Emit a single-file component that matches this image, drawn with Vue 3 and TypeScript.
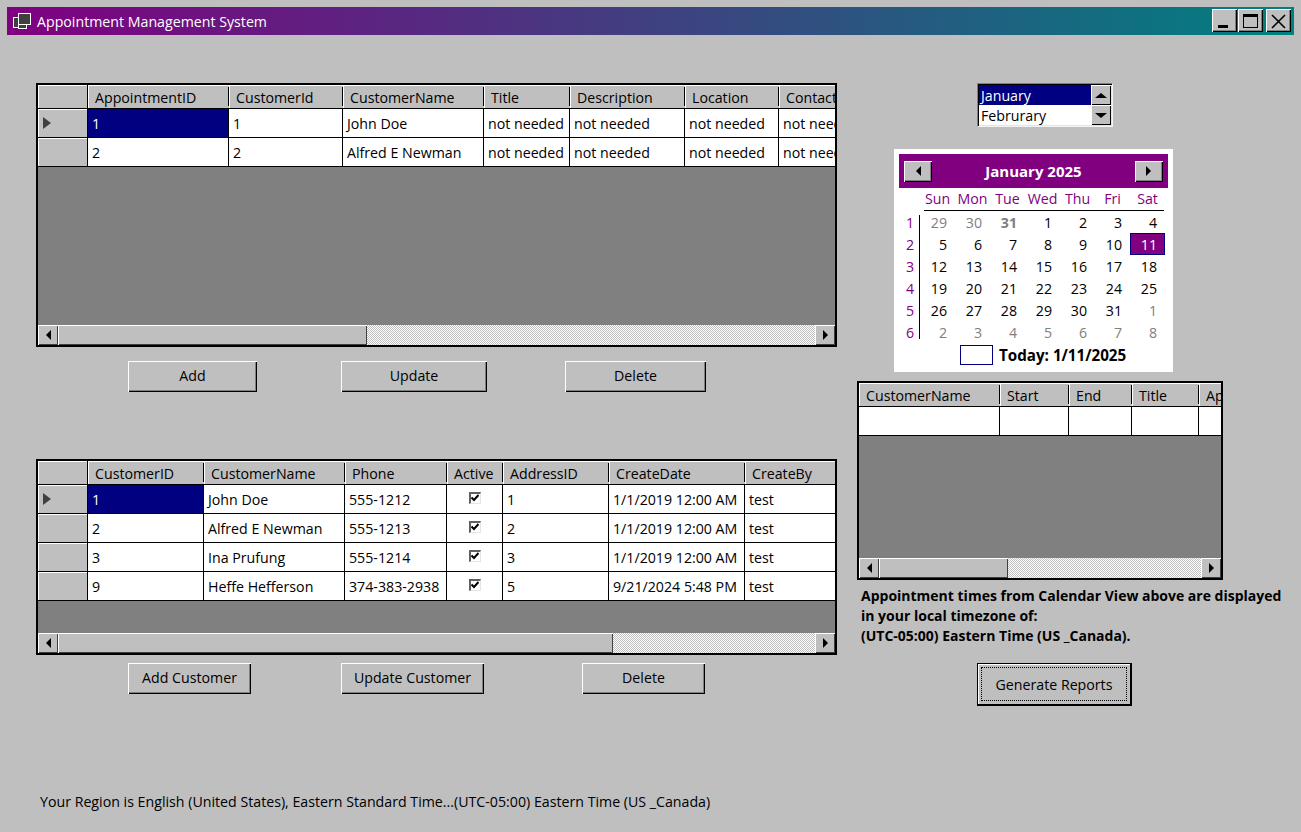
<script setup lang="ts">
interface GridCol { label: string; width: number; check?: boolean }
interface GridDef {
  cls: string
  cols: GridCol[]
  rows: string[][]
  barThumb: number
}

const apptCols: GridCol[] = [
  { label: 'AppointmentID', width: 141 },
  { label: 'CustomerId', width: 114 },
  { label: 'CustomerName', width: 141 },
  { label: 'Title', width: 86 },
  { label: 'Description', width: 115 },
  { label: 'Location', width: 94 },
  { label: 'Contact', width: 108 },
]
const customerCols: GridCol[] = [
  { label: 'CustomerID', width: 116 },
  { label: 'CustomerName', width: 141 },
  { label: 'Phone', width: 102 },
  { label: 'Active', width: 56, check: true },
  { label: 'AddressID', width: 106 },
  { label: 'CreateDate', width: 136 },
  { label: 'CreateBy', width: 120 },
]

const grids: GridDef[] = [
  {
    cls: 'grid--appts',
    cols: apptCols,
    barThumb: 309,
    rows: [
      ['1', '1', 'John Doe', 'not needed', 'not needed', 'not needed', 'not needed'],
      ['2', '2', 'Alfred E Newman', 'not needed', 'not needed', 'not needed', 'not needed'],
    ],
  },
  {
    cls: 'grid--customers',
    cols: customerCols,
    barThumb: 555,
    rows: [
      ['1', 'John Doe', '555-1212', '', '1', '1/1/2019 12:00 AM', 'test'],
      ['2', 'Alfred E Newman', '555-1213', '', '2', '1/1/2019 12:00 AM', 'test'],
      ['3', 'Ina Prufung', '555-1214', '', '3', '1/1/2019 12:00 AM', 'test'],
      ['9', 'Heffe Hefferson', '374-383-2938', '', '5', '9/21/2024 5:48 PM', 'test'],
    ],
  },
]

const viewCols: GridCol[] = [
  { label: 'CustomerName', width: 141 },
  { label: 'Start', width: 69 },
  { label: 'End', width: 63 },
  { label: 'Title', width: 67 },
  { label: 'Appointment', width: 60 },
]

const actionRows = [
  [
    { label: 'Add', width: 129, gap: 84 },
    { label: 'Update', width: 146, gap: 78 },
    { label: 'Delete', width: 141, gap: 0 },
  ],
  [
    { label: 'Add Customer', width: 123, gap: 90 },
    { label: 'Update Customer', width: 143, gap: 98 },
    { label: 'Delete', width: 123, gap: 0 },
  ],
]

const dayNames = ['Sun', 'Mon', 'Tue', 'Wed', 'Thu', 'Fri', 'Sat']
// Six week rows, leading and trailing days are drawn muted.
const weeks = [
  [29, 30, 31, 1, 2, 3, 4],
  [5, 6, 7, 8, 9, 10, 11],
  [12, 13, 14, 15, 16, 17, 18],
  [19, 20, 21, 22, 23, 24, 25],
  [26, 27, 28, 29, 30, 31, 1],
  [2, 3, 4, 5, 6, 7, 8],
]
const isMuted = (w: number, d: number) => (w === 0 && d < 3) || (w === 4 && d === 6) || w === 5
</script>

<template>
  <div class="window">
    <header class="titlebar">
      <svg class="titlebar__icon" width="18" height="16" viewBox="0 0 18 16">
        <rect x="5.500" y="0.500" width="12" height="11" fill="#404040" stroke="#fff" />
        <rect x="0.500" y="4.500" width="5" height="10" fill="#404040" stroke="#fff" />
        <rect x="5.500" y="11.500" width="8" height="4" fill="#404040" stroke="#fff" />
      </svg>
      <span class="titlebar__text">Appointment Management System</span>
      <div class="titlebar__btns">
        <button class="caption-btn">
          <svg width="25" height="23" viewBox="0 0 25 23"><rect x="6" y="16" width="10" height="3" fill="#000" /></svg>
        </button>
        <button class="caption-btn">
          <svg width="25" height="23" viewBox="0 0 25 23"><rect x="5.500" y="5.500" width="14" height="13" fill="none" stroke="#000" /><rect x="5" y="5" width="15" height="3" fill="#000" /></svg>
        </button>
        <button class="caption-btn caption-btn--close">
          <svg width="25" height="23" viewBox="0 0 25 23"><path d="M6 6 L19 19 M19 6 L6 19" stroke="#000" stroke-width="1.600" fill="none" /></svg>
        </button>
      </div>
    </header>

    <main class="content">
      <section class="col-left">
        <template v-for="(grid, gi) in grids" :key="grid.cls">
          <div class="grid" :class="grid.cls">
            <div class="grid__head">
              <div class="grid__corner"></div>
              <div v-for="col in grid.cols" :key="col.label" class="grid__hcell" :style="{ width: col.width + 'px' }">{{ col.label }}</div>
            </div>
            <div v-for="(row, ri) in grid.rows" :key="ri" class="grid__row">
              <div class="grid__rowhead"><i v-if="ri === 0" class="row-arrow"></i></div>
              <div
                v-for="(cell, ci) in row"
                :key="ci"
                class="grid__cell"
                :class="{ 'grid__cell--sel': ri === 0 && ci === 0 }"
                :style="{ width: grid.cols[ci].width + 'px' }"
              >
                <span v-if="grid.cols[ci].check" class="check">
                  <svg width="8" height="8" viewBox="0 0 8 8"><path d="M0.500 3.500 L3 6 L7.500 1" fill="none" stroke="#000" stroke-width="2" /></svg>
                </span>
                <template v-else>{{ cell }}</template>
              </div>
            </div>
            <div class="grid__empty"></div>
            <div class="hbar">
              <div class="hbar__btn"><i class="tri tri--left"></i></div>
              <div class="hbar__thumb" :style="{ width: grid.barThumb + 'px' }"></div>
              <div class="hbar__track"></div>
              <div class="hbar__btn"><i class="tri tri--right"></i></div>
            </div>
          </div>
          <div class="actions" :class="`actions--${gi}`">
            <button
              v-for="btn in actionRows[gi]"
              :key="btn.label"
              class="btn"
              :style="{ width: btn.width + 'px', marginRight: btn.gap + 'px' }"
            >{{ btn.label }}</button>
          </div>
        </template>
        <p class="status">Your Region is English (United States), Eastern Standard Time...(UTC-05:00) Eastern Time (US _Canada)</p>
      </section>

      <aside class="col-right">
        <div class="listbox">
          <div class="listbox__items">
            <div class="listbox__item listbox__item--sel">January</div>
            <div class="listbox__item">Februrary</div>
          </div>
          <div class="listbox__bar">
            <div class="listbox__btn"><i class="tri tri--up"></i></div>
            <div class="listbox__btn"><i class="tri tri--down"></i></div>
          </div>
        </div>

        <div class="calendar">
          <div class="calendar__head">
            <button class="calendar__nav"><i class="tri tri--left"></i></button>
            <span class="calendar__title">January 2025</span>
            <button class="calendar__nav"><i class="tri tri--right"></i></button>
          </div>
          <div class="calendar__names">
            <span v-for="name in dayNames" :key="name">{{ name }}</span>
          </div>
          <div class="calendar__body">
            <div class="calendar__weeks">
              <span v-for="n in 6" :key="n">{{ n }}</span>
            </div>
            <div class="calendar__days">
              <template v-for="(week, w) in weeks" :key="w">
                <span
                  v-for="(day, d) in week"
                  :key="d"
                  class="day"
                  :class="{
                    'day--muted': isMuted(w, d),
                    'day--bold': w === 0 && d === 2,
                    'day--sel': w === 1 && d === 6,
                  }"
                >{{ day }}</span>
              </template>
            </div>
          </div>
          <div class="calendar__today">
            <i class="calendar__swatch"></i>
            <span>Today: 1/11/2025</span>
          </div>
        </div>

        <div class="grid grid--view">
          <div class="grid__head">
            <div v-for="col in viewCols" :key="col.label" class="grid__hcell" :style="{ width: col.width + 'px' }">{{ col.label }}</div>
          </div>
          <div class="grid__row">
            <div v-for="col in viewCols" :key="col.label" class="grid__cell" :style="{ width: col.width + 'px' }"></div>
          </div>
          <div class="grid__empty"></div>
          <div class="hbar">
            <div class="hbar__btn"><i class="tri tri--left"></i></div>
            <div class="hbar__thumb" style="width: 129px"></div>
            <div class="hbar__track"></div>
            <div class="hbar__btn"><i class="tri tri--right"></i></div>
          </div>
        </div>

        <p class="note">
          Appointment times from Calendar View above are displayed<br />
          in your local timezone of:<br />
          (UTC-05:00) Eastern Time (US _Canada).
        </p>

        <button class="btn btn--default"><span>Generate Reports</span></button>
      </aside>
    </main>
  </div>
</template>

<style>
html,
body {
  margin: 0;
  background: #bfbfbf;
}
</style>

<style scoped>
.window {
  width: 1301px;
  height: 832px;
  box-sizing: border-box;
  padding-top: 7px;
  overflow: hidden;
  background: #bfbfbf;
  color: #000;
  font-family: 'Open Sans', 'Noto Sans', sans-serif;
  font-size: 14.200px;
}
.titlebar {
  display: flex;
  align-items: center;
  width: 1287px;
  height: 28px;
  margin-left: 7px;
  background: linear-gradient(90deg, #800080, #008080);
  color: #fff;
}
.titlebar__icon {
  margin: 0 6px 0 6px;
}
.titlebar__btns {
  display: flex;
  margin-left: auto;
  margin-right: 3px;
  margin-bottom: 1px;
}
.caption-btn {
  width: 25px;
  height: 23px;
  padding: 0;
  margin-left: 1px;
  border: 0;
  background: #bfbfbf;
  box-shadow: inset 1px 1px 0 #fff, inset -1px -1px 0 #000, inset -2px -2px 0 #808080;
}
.caption-btn--close {
  margin-left: 3px;
}
.caption-btn svg {
  display: block;
}

.content {
  display: flex;
  gap: 20px;
  padding-left: 36px;
}
.col-left {
  width: 801px;
  padding-top: 48px;
}
.col-right {
  display: flex;
  flex-direction: column;
  align-items: flex-start;
  padding-top: 48px;
}

/* data grids */
.grid {
  display: flex;
  flex-direction: column;
  box-sizing: border-box;
  overflow: hidden;
  border: 2px solid #000;
  background: #808080;
}
.grid--appts {
  height: 264px;
}
.grid--customers {
  height: 196px;
}
.grid--view {
  width: 366px;
  height: 199px;
  margin-top: 9px;
}
.grid__head,
.grid__row {
  display: flex;
  flex: none;
}
.grid__head {
  box-sizing: border-box;
  height: 24px;
  border-bottom: 1px solid #000;
  background: #bfbfbf;
}
.grid--customers .grid__head {
  height: 24px;
}
.grid__corner,
.grid__rowhead {
  flex: none;
  box-sizing: border-box;
  width: 50px;
  border-right: 1px solid #000;
  background: #bfbfbf;
}
.grid__corner {
  box-shadow: inset 1px 1px 0 #fff;
}
.grid__hcell {
  flex: none;
  box-sizing: border-box;
  padding-left: 7px;
  line-height: 25px;
  white-space: nowrap;
  overflow: hidden;
  position: relative;
  box-shadow: inset 1px 1px 0 #fff;
}
.grid__hcell::after {
  content: '';
  position: absolute;
  right: 0;
  top: 2px;
  bottom: 2px;
  width: 1px;
  background: #000;
}
.grid__row {
  height: 29px;
}
.grid__rowhead {
  display: flex;
  align-items: center;
  border-bottom: 1px solid #000;
  box-shadow: inset 1px 1px 0 #fff;
  padding-left: 5px;
}
.grid__cell {
  flex: none;
  box-sizing: border-box;
  padding-left: 4px;
  border-right: 1px solid #000;
  border-bottom: 1px solid #000;
  background: #fff;
  line-height: 29px;
  white-space: nowrap;
  overflow: hidden;
}
.grid__cell--sel {
  background: #000080;
  color: #fff;
}
.grid__empty {
  flex: 1;
}
.row-arrow {
  width: 0;
  height: 0;
  border-left: 8px solid #404040;
  border-top: 6px solid transparent;
  border-bottom: 6px solid transparent;
}
.check {
  display: block;
  box-sizing: border-box;
  width: 12px;
  height: 12px;
  margin: 7px 0 0 18px;
  padding: 2px 0 0 2px;
  border-style: solid;
  border-width: 2px 1px 1px 2px;
  border-color: #606060 #e4e4e4 #e4e4e4 #606060;
  background: #fff;
}
.check svg {
  display: block;
  margin: -2px 0 0 -2px;
}

/* horizontal scrollbar along the bottom of a grid */
.hbar {
  display: flex;
  flex: none;
  height: 20px;
}
.hbar__btn {
  flex: none;
  display: flex;
  align-items: center;
  justify-content: center;
  box-sizing: border-box;
  width: 20px;
  background: #bfbfbf;
  box-shadow: inset 1px 1px 0 #fff, inset -1px -1px 0 #404040;
}
.hbar__thumb {
  flex: none;
  background: #bfbfbf;
  box-shadow: inset 1px 1px 0 #fff, inset -1px -1px 0 #404040;
}
.hbar__track {
  flex: 1;
  background: repeating-conic-gradient(#fff 0 25%, #bfbfbf 0 50%) 0 0 / 2px 2px;
}
.tri {
  display: block;
  width: 0;
  height: 0;
  border-style: solid;
  border-color: transparent;
}
.tri--left {
  border-width: 5px 5px 5px 0;
  border-right-color: #000;
}
.tri--right {
  border-width: 5px 0 5px 5px;
  border-left-color: #000;
}
.tri--up {
  border-width: 0 6px 5px;
  border-bottom-color: #000;
}
.tri--down {
  border-width: 5px 6px 0;
  border-top-color: #000;
}

/* push buttons */
.actions {
  display: flex;
  padding-left: 92px;
}
.actions--0 {
  margin-top: 14px;
  margin-bottom: 67px;
}
.actions--1 {
  margin-top: 8px;
}
.btn {
  box-sizing: border-box;
  height: 31px;
  padding: 0 0 2px;
  border: 0;
  background: #bfbfbf;
  box-shadow: inset 1px 1px 0 #fff, inset -1px -1px 0 #000, inset -2px -2px 0 #808080;
  color: #000;
  font: inherit;
}
.status {
  margin: 98px 0 0 4px;
  line-height: 20px;
  white-space: nowrap;
}

/* month list */
.listbox {
  display: flex;
  box-sizing: border-box;
  width: 136px;
  height: 44px;
  margin-left: 120px;
  border: 1px solid;
  border-color: #808080 #f4f4f4 #f4f4f4 #808080;
  box-shadow: inset 1px 1px 0 #000, inset -1px -1px 0 #e4e4e4;
  padding: 1px;
  background: #fff;
}
.listbox__items {
  flex: 1;
}
.listbox__item {
  height: 20px;
  padding-left: 2px;
  line-height: 22px;
}
.listbox__item--sel {
  background: #000080;
  color: #fff;
}
.listbox__bar {
  width: 20px;
}
.listbox__btn {
  display: flex;
  align-items: center;
  justify-content: center;
  height: 20px;
  background: #bfbfbf;
  box-shadow: inset 1px 1px 0 #fff, inset -1px -1px 0 #000;
}

/* month calendar */
.calendar {
  box-sizing: border-box;
  width: 279px;
  height: 223px;
  margin: 22px 0 0 37px;
  padding: 5px;
  background: #fff;
}
.calendar__head {
  display: flex;
  align-items: center;
  justify-content: space-between;
  height: 34px;
  padding: 0 5px;
  background: #800080;
  color: #fff;
}
.calendar__title {
  font-size: 15px;
  font-weight: 700;
}
.calendar__nav {
  display: flex;
  align-items: center;
  justify-content: center;
  width: 28px;
  height: 21px;
  padding: 0;
  border: 0;
  background: #bfbfbf;
  box-shadow: inset 1px 1px 0 #fff, inset -1px -1px 0 #000, inset -2px -2px 0 #808080;
}
.calendar__names {
  display: grid;
  grid-template-columns: repeat(7, 35px);
  height: 23px;
  margin-left: 21px;
  background: linear-gradient(#000, #000) 4px bottom / 240px 1px no-repeat;
  color: #800080;
  line-height: 22px;
  text-align: center;
}
.calendar__body {
  display: flex;
  height: 132px;
}
.calendar__weeks {
  display: grid;
  grid-auto-rows: 22px;
  width: 21px;
  box-sizing: border-box;
  background: linear-gradient(#000, #000) right 4px / 1px 124px no-repeat;
  padding-right: 6px;
  color: #800080;
  line-height: 24px;
  text-align: right;
}
.calendar__days {
  display: grid;
  grid-template-columns: repeat(7, 35px);
  grid-auto-rows: 22px;
}
.day {
  box-sizing: border-box;
  padding-right: 8px;
  line-height: 24px;
  text-align: right;
}
.day--muted {
  color: #808080;
}
.day--bold {
  font-weight: 700;
}
.day--sel {
  background: #800080;
  color: #fff;
  box-shadow: inset 0 0 0 1px #000080;
}
.calendar__today {
  display: flex;
  align-items: center;
  gap: 6px;
  margin: 2px 0 0 61px;
  font-size: 15.200px;
  font-weight: 700;
}
.calendar__swatch {
  width: 33px;
  height: 20px;
  box-sizing: border-box;
  border: 1px solid #000080;
}

.note {
  margin: 6px 0 0 4px;
  font-size: 14px;
  font-weight: 700;
  line-height: 20px;
  white-space: nowrap;
}
.btn--default {
  width: 155px;
  height: 43px;
  margin: 17px 0 0 120px;
  padding: 3px;
  border: 1px solid #000;
  border-width: 1px 2px 2px 1px;
  box-shadow: inset 1px 1px 0 #fff;
}
.btn--default span {
  display: flex;
  align-items: center;
  justify-content: center;
  height: 100%;
  border: 1px dotted #000;
  box-sizing: border-box;
}
</style>
